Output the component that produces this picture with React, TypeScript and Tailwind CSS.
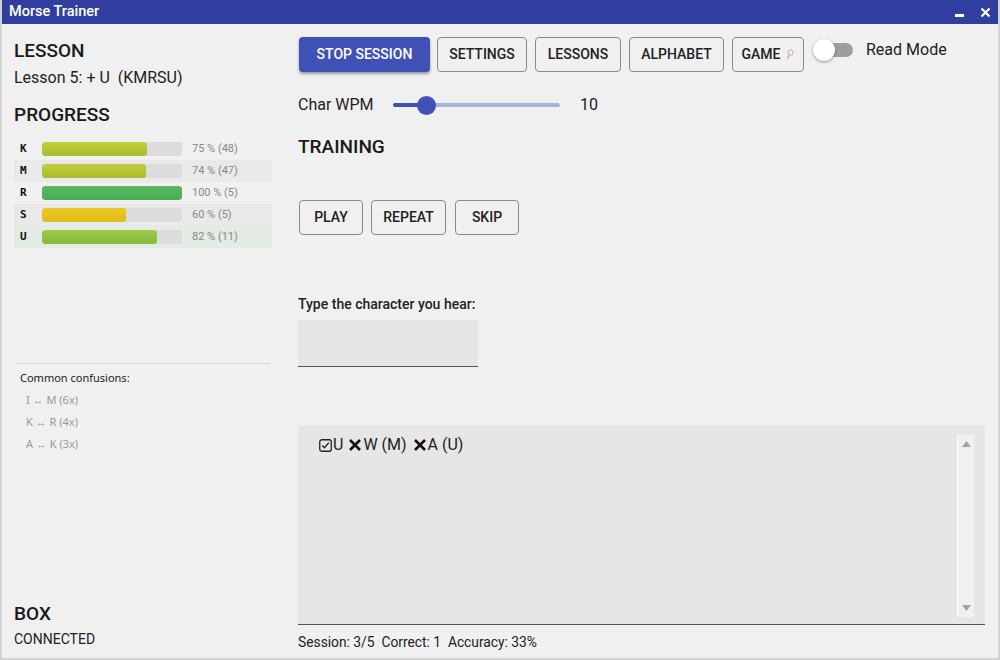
import React from "react";

type Row = { ch: string; pct: number; n: number; color: string; rowBg: string };

const rows: Row[] = [
  { ch: "K", pct: 75, n: 48, color: "bg-[linear-gradient(#c3cd3c,#a9bc2c)]", rowBg: "" },
  { ch: "M", pct: 74, n: 47, color: "bg-[linear-gradient(#c3cd3c,#a9bc2c)]", rowBg: "bg-[#e9e9e9]" },
  { ch: "R", pct: 100, n: 5, color: "bg-[linear-gradient(#5cba64,#49a955)]", rowBg: "" },
  { ch: "S", pct: 60, n: 5, color: "bg-[linear-gradient(#ecc92a,#dfbc18)]", rowBg: "bg-[#e9e9e9]" },
  { ch: "U", pct: 82, n: 11, color: "bg-[linear-gradient(#9cc94a,#88b83c)]", rowBg: "bg-[#e3ece3]" },
];

const confusions = ["I ↔ M (6x)", "K ↔ R (4x)", "A ↔ K (3x)"];

function OutlineButton({ label, className = "" }: { label: React.ReactNode; className?: string }) {
  return (
    <button
      className={`h-[35px] rounded-[4px] border border-[#8a8a8a] bg-[#f0f0f0] text-[14px] font-medium text-[#222] flex items-center justify-center ${className}`}
    >
      {label}
    </button>
  );
}

export default function App() {
  return (
    <div className="w-[1000px] h-[660px] overflow-hidden bg-[#f0f0f0] font-['Roboto',sans-serif] text-[#1e1e1e] border-x-2 border-b-2 border-[#d4d4d4] flex flex-col">
      {/* title bar */}
      <div className="h-6 bg-[#303f9f] flex items-center justify-between pl-[9px] pr-2 text-white -mx-[2px]">
        <span className="text-[14.5px] font-medium">Morse Trainer</span>
        <div className="flex items-center gap-4 pr-[1px]">
          <span className="block w-[9px] h-[3px] bg-white mt-[7px]" />
          <svg width="11" height="11" viewBox="0 0 11 11">
            <path d="M1.5 1.5 L9.5 9.5 M9.5 1.5 L1.5 9.5" stroke="white" strokeWidth="2.2" />
          </svg>
        </div>
      </div>

      <div className="flex flex-1 min-h-0">
        {/* left panel */}
        <div className="w-[284px] pl-3 pr-[14px] pt-[15px] pb-[8px] flex flex-col">
          <h2 className="text-[19px] font-medium leading-6 text-[#1a1a1a]">LESSON</h2>
          <div className="text-[16px] leading-5 mt-[5px] text-[#222]">Lesson 5: + U&nbsp; (KMRSU)</div>
          <h2 className="text-[19px] font-medium leading-6 mt-[15px] text-[#1a1a1a]">PROGRESS</h2>
          <div className="mt-[11px] flex flex-col">
            {rows.map((r) => (
              <div key={r.ch} className={`h-[22px] flex items-center ${r.rowBg}`}>
                <span className="w-[28px] pl-[6px] font-['DejaVu_Sans_Mono',monospace] font-bold text-[11px] text-[#111]">
                  {r.ch}
                </span>
                <div className="w-[140px] h-[14px] rounded-[3px] bg-[#dcdcdc] overflow-hidden">
                  <div className={`h-full rounded-[3px] ${r.color}`} style={{ width: `${r.pct}%` }} />
                </div>
                <span className="ml-[10px] text-[11px] text-[#888]">
                  {r.pct} % ({r.n})
                </span>
              </div>
            ))}
          </div>

          <div className="mt-[115px] border-t border-[#dadada] mx-[2px] pt-[6px] font-['Noto_Sans',sans-serif]">
            <div className="text-[11px] pl-[4px] text-[#222]">Common confusions:</div>
            <div className="flex flex-col gap-[6px] mt-[5px] pl-[10px]">
              {confusions.map((c) => (
                <div key={c} className="text-[11px] leading-4 text-[#999]">
                  {c}
                </div>
              ))}
            </div>
          </div>

          <div className="mt-auto">
            <h2 className="text-[19px] font-medium leading-6 text-[#1a1a1a]">BOX</h2>
            <div className="text-[14px] mt-[3px] text-[#222]">CONNECTED</div>
          </div>
        </div>

        {/* right panel */}
        <div className="flex-1 pl-[12px] pr-[13px] pt-[13px] flex flex-col">
          <div className="flex items-start">
            <button className="h-[35px] w-[131px] rounded-[4px] bg-[#3f51b5] text-white text-[14px] font-medium shadow-[0_2px_3px_rgba(0,0,0,0.35)] ml-[1px]">
              STOP SESSION
            </button>
            <OutlineButton label="SETTINGS" className="w-[90px] ml-[7px]" />
            <OutlineButton label="LESSONS" className="w-[86px] ml-[8px]" />
            <OutlineButton label="ALPHABET" className="w-[95px] ml-[8px]" />
            <OutlineButton
              label={
                <span className="flex items-center gap-[6px]">
                  GAME
                  <svg width="8" height="11" viewBox="0 0 8 11">
                    <circle cx="4.5" cy="3.5" r="2.6" fill="none" stroke="#c9a6a6" strokeWidth="1" />
                    <path d="M3 6 L1.5 10" stroke="#b68eb6" strokeWidth="1" />
                  </svg>
                </span>
              }
              className="w-[72px] ml-[8px]"
            />
            <div className="ml-[9px] mt-[3px] relative w-[40px] h-[20px] flex items-center">
              <div className="w-[34px] h-[14px] rounded-full bg-[#9e9e9e] ml-[6px]" />
              <div className="absolute left-0 top-[-1px] w-[22px] h-[22px] rounded-full bg-white shadow-[0_1px_3px_rgba(0,0,0,0.4)]" />
            </div>
            <span className="ml-[13px] mt-[1px] text-[16px] text-[#222]">Read Mode</span>
          </div>

          <div className="flex items-center mt-[23px] h-5">
            <span className="text-[16px] text-[#222] w-[95px]">Char WPM</span>
            <div className="relative w-[167px] h-5 flex items-center">
              <div className="w-full h-[4px] rounded-full bg-[#a9b1df]" />
              <div className="absolute left-0 w-[34px] h-[4px] rounded-full bg-[#3f51b5]" />
              <div className="absolute left-[24px] top-[1px] w-[19px] h-[19px] rounded-full bg-[#3f51b5]" />
            </div>
            <span className="ml-[20px] text-[16px] text-[#222]">10</span>
          </div>

          <h2 className="mt-[20px] text-[19px] font-medium leading-6 text-[#1a1a1a]">TRAINING</h2>

          <div className="flex mt-[41px] ml-[1px]">
            <OutlineButton label="PLAY" className="w-[64px]" />
            <OutlineButton label="REPEAT" className="w-[75px] ml-[8px]" />
            <OutlineButton label="SKIP" className="w-[64px] ml-[9px]" />
          </div>

          <div className="mt-[59px] text-[14px] font-medium text-[#222]">Type the character you hear:</div>
          <div className="mt-[5px] w-[180px] h-[47px] bg-[#e6e6e6] border-b border-[#555]" />

          <div className="mt-[58px] h-[200px] bg-[#e6e6e6] border-b border-[#555] flex pt-[10px] pl-[21px] pr-[11px] pb-[7px]">
            <div className="flex-1 text-[16px] text-[#222] flex items-center h-[20px]">
              <svg width="13" height="13" viewBox="0 0 13 13" className="mr-[1px]">
                <rect x="0.75" y="0.75" width="11.5" height="11.5" rx="2" fill="none" stroke="#222" strokeWidth="1.3" />
                <path d="M3.2 6.5 L5.4 8.8 L9.8 3.8" fill="none" stroke="#222" strokeWidth="1.3" />
              </svg>
              <span>U</span>
              <svg width="14" height="14" viewBox="0 0 14 14" className="ml-[5px] mr-[1px]">
                <path d="M2 2 L12 12 M12 2 L2 12" stroke="#111" strokeWidth="2.6" />
              </svg>
              <span>W (M)</span>
              <svg width="14" height="14" viewBox="0 0 14 14" className="ml-[6px] mr-[1px]">
                <path d="M2 2 L12 12 M12 2 L2 12" stroke="#111" strokeWidth="2.6" />
              </svg>
              <span>A (U)</span>
            </div>
            <div className="w-[17px] bg-[#f0f0f0] border-l border-white flex flex-col items-center justify-between py-[6px]">
              <svg width="9" height="6" viewBox="0 0 9 6">
                <path d="M0 6 L4.5 0 L9 6 Z" fill="#a3a3a3" />
              </svg>
              <svg width="9" height="6" viewBox="0 0 9 6">
                <path d="M0 0 L9 0 L4.5 6 Z" fill="#a3a3a3" />
              </svg>
            </div>
          </div>

          <div className="mt-[7px] text-[13.8px] text-[#222] whitespace-pre">Session: 3/5  Correct: 1  Accuracy: 33%</div>
        </div>
      </div>
    </div>
  );
}
